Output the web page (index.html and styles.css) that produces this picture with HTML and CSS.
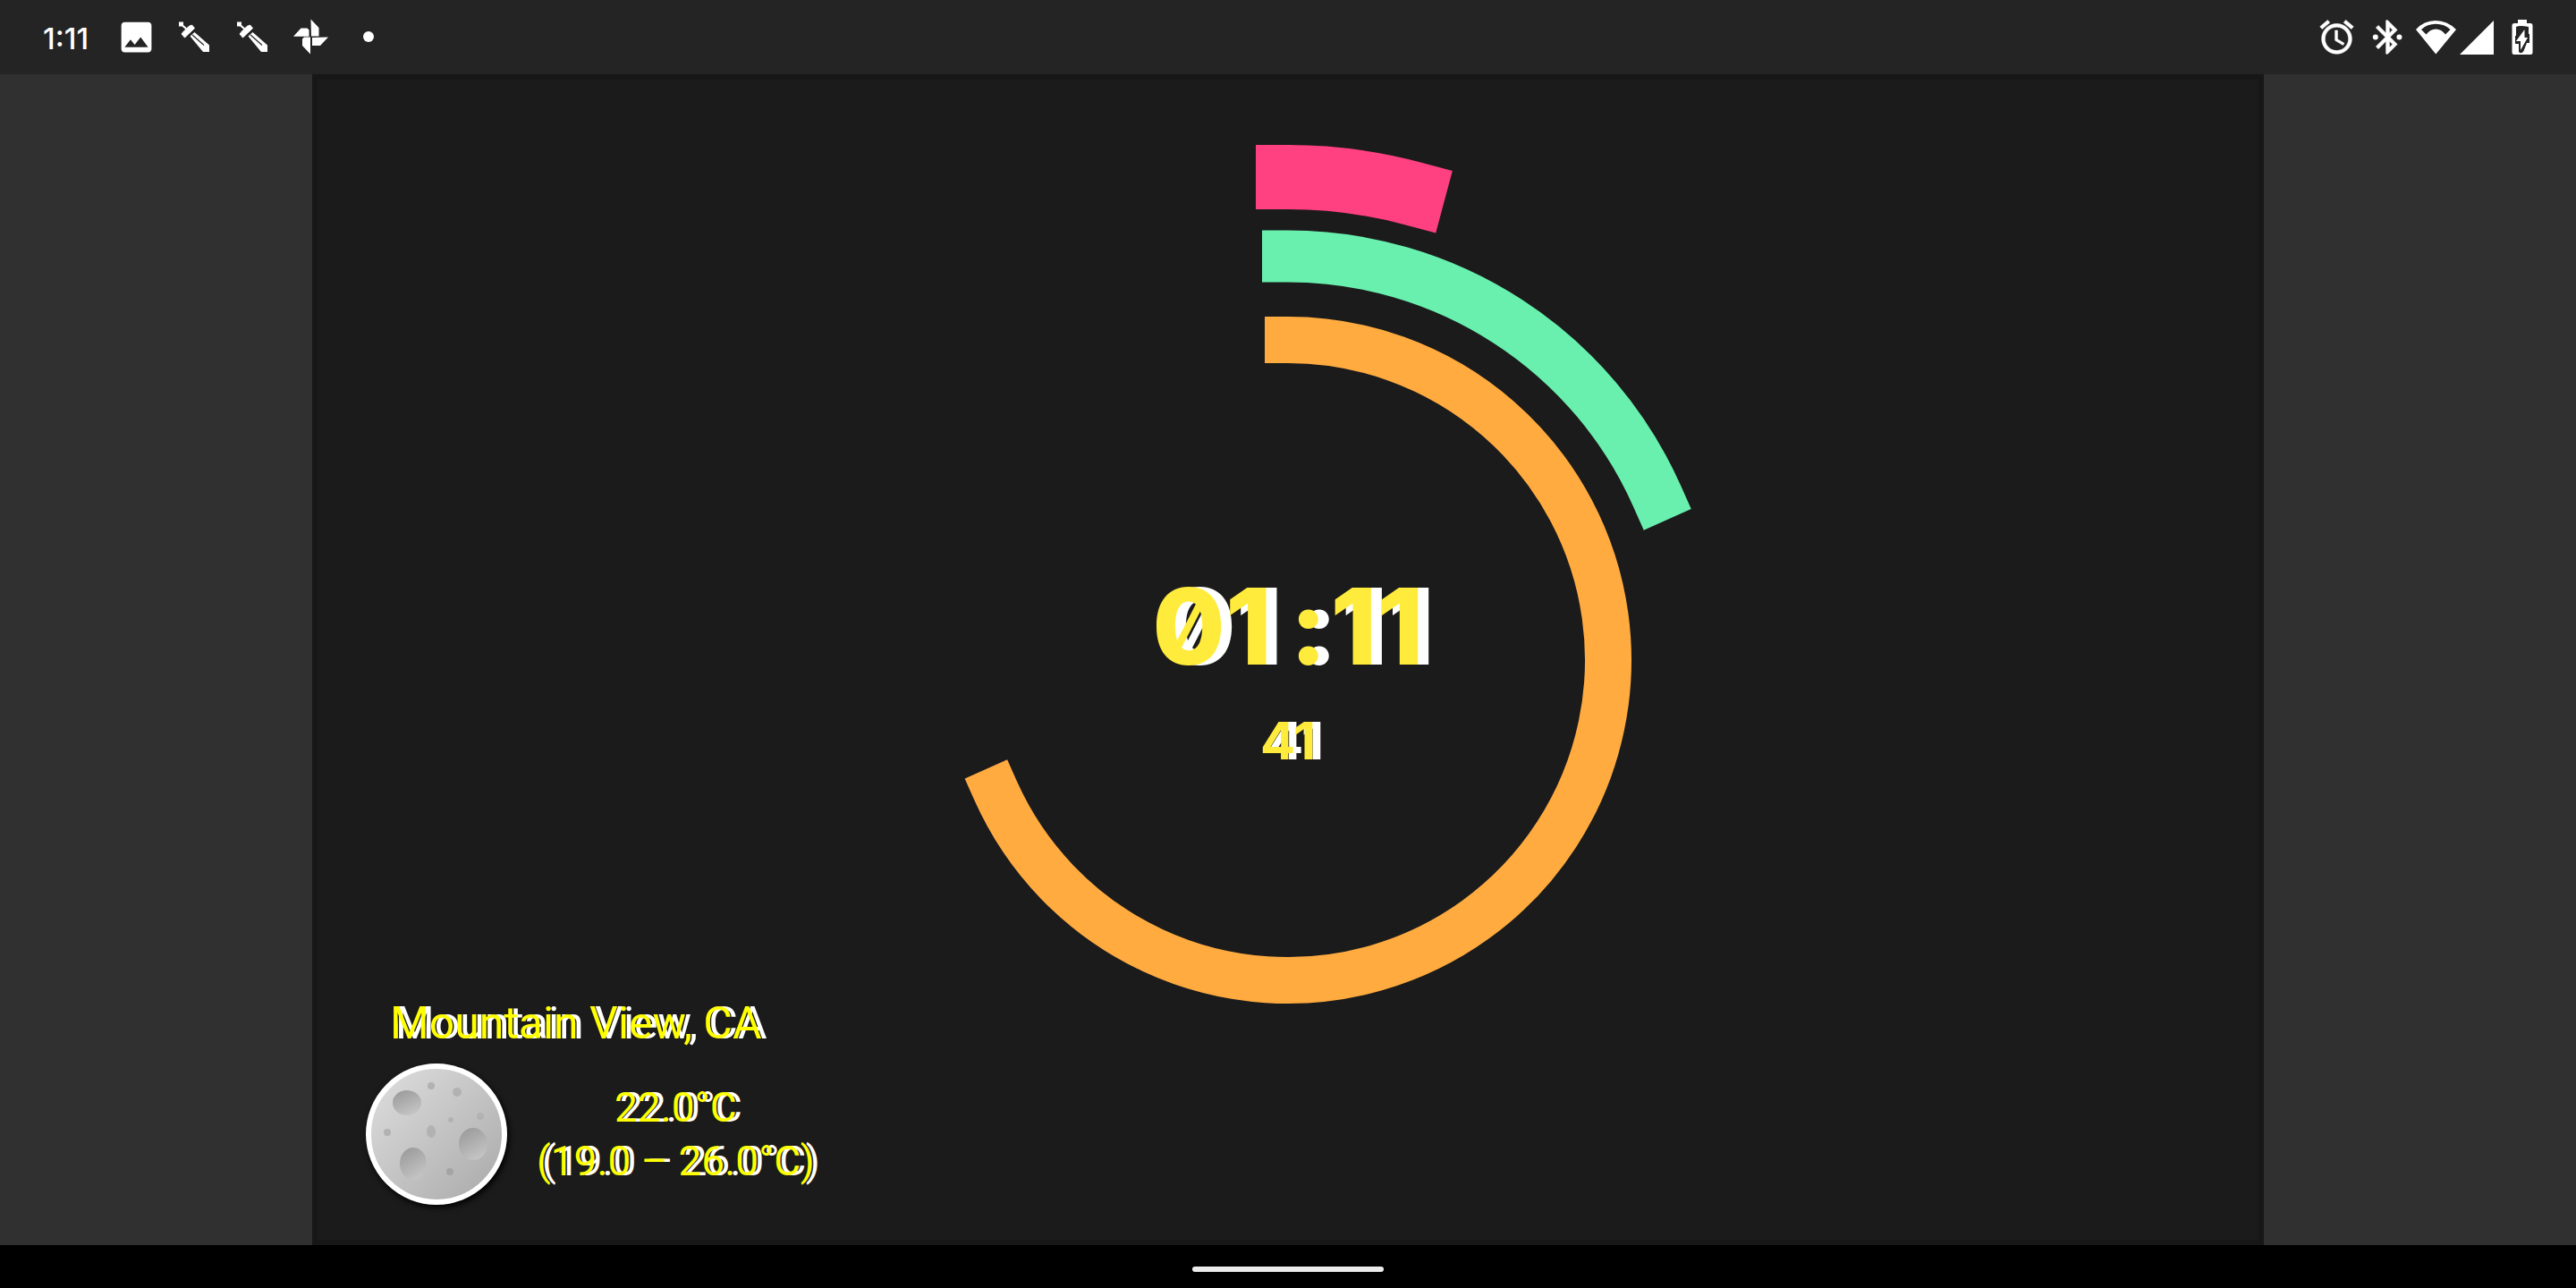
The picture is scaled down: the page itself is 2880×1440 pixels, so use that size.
FILE: index.html
```html
<!DOCTYPE html>
<html lang="en">
<head>
<meta charset="utf-8">
<meta name="viewport" content="width=device-width, initial-scale=1">
<title>Clock dream</title>
<link rel="stylesheet" href="styles.css">
</head>
<body>
<header class="status-bar">
  <div class="status-left">
    <time class="status-time">1:11</time>
    <svg class="icon" viewBox="0 0 24 24"><path d="M21 19V5c0-1.100-.9-2-2-2H5c-1.100 0-2 .9-2 2v14c0 1.100.9 2 2 2h14c1.100 0 2-.9 2-2zM8.500 13.500l2.500 3.010L14.500 12l4.500 6H5l3.500-4.500z"/></svg>
    <svg class="icon" viewBox="0 0 45 45"><use href="#sword"/></svg>
    <svg class="icon" viewBox="0 0 45 45">
      <g id="sword">
        <path d="M5 5.500h5v3.500l4 3.500-1.500 1.500-4-3.500H5z"/>
        <path d="M19.500 9l3 3.500-11 10.500-3.500-4 2-2.500 6-6z" stroke="#fff" stroke-linejoin="round"/>
        <path d="M22.500 17l16.500 14.500V39h-7L17.500 21.500z"/>
        <path d="M20 20l13 11.500" stroke="#242424" stroke-width="1.200"/>
      </g>
    </svg>
    <svg class="icon" viewBox="0 0 45 45"><path d="M22.500 2.500l9 9.500v9.500h-8.500zM42 22.500l-9 9.500h-9v-9zM22 41.500l-9-9.500v-7.500l2-2h7zM3 21.800L11.500 12.500h7l2 2v7.300z"/></svg>
    <svg class="icon" viewBox="0 0 45 45"><circle cx="22" cy="22" r="6"/></svg>
  </div>
  <div class="status-right">
    <svg class="icon" viewBox="0 0 24 24"><path d="M22 5.720l-4.600-3.860-1.290 1.530 4.600 3.860L22 5.720zM7.880 3.390L6.600 1.860 2 5.710l1.290 1.530 4.590-3.850zM12.500 8H11v6l4.750 2.850.75-1.230-4-2.370V8zM12 4c-4.970 0-9 4.030-9 9s4.020 9 9 9a9 9 0 0 0 0-18zm0 16c-3.870 0-7-3.130-7-7s3.130-7 7-7 7 3.130 7 7-3.130 7-7 7z" stroke="#fff" stroke-width=".3"/></svg>
    <svg class="icon" viewBox="0 0 24 24"><path d="M17.710 7.710L12 2h-1v7.590L6.410 5 5 6.410 10.590 12 5 17.590 6.410 19 11 14.410V22h1l5.710-5.710-4.300-4.290 4.300-4.290zM13 5.830l1.880 1.880L13 9.590V5.830zm1.880 10.460L13 18.170v-3.760l1.880 1.880z" stroke="#fff" stroke-width=".3"/><circle cx="4.700" cy="12" r="1.600"/><circle cx="18.900" cy="12" r="1.600"/></svg>
    <div class="signal-group">
      <svg class="icon-wifi" viewBox="0 0 46 40"><path fill-rule="evenodd" d="M23.300 38.500L1 11Q10 1 23 1T46 11zM7 11l5.500 5.500Q17 10.500 23.300 10.500T34 16.500L39.500 11Q33 4.800 23.300 4.800T7 11z"/></svg>
      <svg class="icon-cell" viewBox="0 0 38 40"><path d="M38 1v38H0z"/></svg>
    </div>
    <svg class="icon-battery" viewBox="0 0 24 40">
      <path d="M7 0h10v4h4q2.500 0 2.500 2.500v30q0 2.500-2.500 2.500H3Q.5 39 .5 36.500v-30Q.5 4 3 4h4z"/>
      <path fill="#242424" d="M5 8q4-2 14 0v8h1v10h-3l-3.500 9q-2.500 4-5.500 1V27H4V18h1z"/>
      <path d="M14.500 11v9H18L10 34V24H5z"/>
    </svg>
  </div>
</header>

<main class="stage">
  <section class="panel">
    <svg class="dial" viewBox="0 0 1152 1152" fill="none" stroke-linecap="square">
      <path stroke="#ff4081" stroke-width="72" d="M576 36A540 540 0 0 1 715.760 54.400"/>
      <path stroke="#69f0ae" stroke-width="58" d="M576 124.500A451.500 451.500 0 0 1 988.470 392.360"/>
      <path stroke="#ffab40" stroke-width="52" d="M576 218A358 358 0 1 1 248.950 721.610"/>
    </svg>
    <div class="clock">
      <time class="clock-time">01<span class="clock-colon">:</span>11</time>
      <span class="clock-seconds">41</span>
    </div>
    <div class="weather">
      <p class="weather-place">Mountain View, CA</p>
      <div class="weather-row">
        <svg class="moon" viewBox="-88 -88 176 176">
          <defs>
            <linearGradient id="face" x1="0" y1="0" x2="1" y2="1"><stop offset="0" stop-color="#e0e0e0"/><stop offset="1" stop-color="#a8a8a8"/></linearGradient>
            <linearGradient id="crater" x1=".2" y1="0" x2=".7" y2="1"><stop offset="0" stop-color="#9a9a9a"/><stop offset="1" stop-color="#c6c6c6"/></linearGradient>
          </defs>
          <circle class="moon-disc" r="76" fill="url(#face)" stroke="#fff" stroke-width="6"/>
          <g fill="url(#crater)">
            <ellipse cx="-33" cy="-35" rx="16" ry="14"/>
            <ellipse cx="41" cy="11" rx="16" ry="18"/>
            <ellipse cx="-26" cy="33" rx="15" ry="18"/>
          </g>
          <g fill="#b2b2b2">
            <circle cx="-6" cy="-54" r="4"/><circle cx="23" cy="-47" r="5"/><circle cx="16" cy="-16" r="3"/>
            <circle cx="49" cy="-20" r="4"/><circle cx="-55" cy="-2" r="4"/><ellipse cx="-6" cy="-3" rx="5" ry="7"/><circle cx="15" cy="42" r="4" fill="#a4a4a4"/>
          </g>
        </svg>
        <p class="weather-temps">22.0°C<br>(19.0 – 26.0°C)</p>
      </div>
    </div>
  </section>
</main>

<footer class="nav-bar"><div class="nav-handle"></div></footer>
</body>
</html>
```
FILE: styles.css
```css
* { box-sizing: border-box; }

body {
  margin: 0;
  min-height: 100vh;
  display: flex;
  flex-direction: column;
  background: #303030;
  color: #fff;
  font-family: Inter, "Liberation Sans", sans-serif;
}

p { margin: 0; }
svg { display: block; fill: #fff; flex: none; }

.status-bar {
  height: 83px;
  padding: 0 48px;
  display: flex;
  align-items: center;
  justify-content: space-between;
  background: #242424;
}

.status-left { display: flex; align-items: center; gap: 20px; }
.status-time { width: 62px; font-size: 33px; line-height: 40px; font-weight: 500; padding-top: 3px; }
.icon { width: 45px; height: 45px; }

.status-right { display: flex; align-items: center; gap: 12px; }
.signal-group { display: flex; gap: 4px; margin-left: -4px; }
.icon-wifi { width: 46px; height: 40px; }
.icon-cell { width: 38px; height: 40px; }
.icon-battery { width: 24px; height: 40px; margin-left: 8px; }

.stage { flex: 1; display: flex; padding: 0 349px; }

.panel {
  flex: 1;
  display: grid;
  grid-template-areas: "face";
  border: 6px solid #171717;
  background: #1b1b1b;
}
.panel > * { grid-area: face; }

.dial {
  width: 1152px;
  max-width: 100%;
  place-self: center;
  fill: none;
}

.clock {
  place-self: center;
  padding-top: 20px;
  display: flex;
  flex-direction: column;
  align-items: center;
  gap: 32px;
  color: #ffeb3b;
  font-feature-settings: "zero";
}
.clock-time { font-size: 118px; line-height: 128px; font-weight: 800; text-shadow: 12px 0 0 #fff; }
.clock-colon { margin: 0 4px 0 20px; }
.clock-seconds { font-size: 58px; line-height: 64px; font-weight: 700; text-shadow: 9px 0 0 #fff; }

.weather {
  place-self: end start;
  padding: 0 0 30px 45px;
  display: flex;
  flex-direction: column;
  gap: 6px;
  color: #ff0;
  font-family: Roboto, "Liberation Sans", sans-serif;
  font-size: 46px;
  line-height: 60px;
  text-shadow: 6px 0 0 #fff;
}
.weather-place { padding-left: 36px; font-size: 50px; }
.weather-row { display: flex; align-items: center; gap: 24px; }
.weather-temps { text-align: center; }
.moon { width: 176px; height: 176px; }
.moon-disc { filter: drop-shadow(2px 3px 3px #000); }

.nav-bar { height: 48px; display: flex; align-items: center; justify-content: center; background: #000; }
.nav-handle { width: 214px; height: 6px; border-radius: 3px; background: #ececec; margin-top: 6px; }
```
